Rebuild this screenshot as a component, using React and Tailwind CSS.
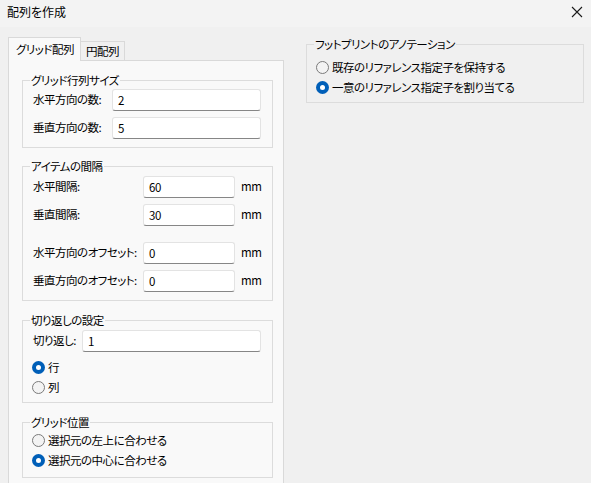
import React, { useState } from "react";

const Radio = ({ checked, label, onClick }) => (
  <div className="flex items-center h-[20px] leading-[20px] gap-[3px] cursor-default whitespace-nowrap" onClick={onClick}>
    {checked ? (
      <span className="w-[13px] h-[13px] rounded-full bg-[#005fb8] flex items-center justify-center shrink-0">
        <span className="w-[5px] h-[5px] rounded-full bg-white" />
      </span>
    ) : (
      <span className="w-[13px] h-[13px] rounded-full border border-[#7a7a7a] bg-[#f3f3f3] shrink-0" />
    )}
    <span>{label}</span>
  </div>
);

const TextBox = ({ value, className = "" }) => (
  <div
    className={`h-[22px] bg-white border border-[#e3e3e3] border-b-[#868686] rounded-[3px] pl-[5px] flex items-center leading-[14px] ${className}`}
  >
    {value}
  </div>
);

// Group box: legend sits on the top border like a Windows group box
const Group = ({ title, className = "", inner = "", children }) => (
  <fieldset className={`border border-[#dcdcdc] p-0 ${className}`}>
    <legend className="ml-[7px] px-[1px] leading-[14px] whitespace-nowrap">{title}</legend>
    <div className={inner}>{children}</div>
  </fieldset>
);

const Row = ({ label, value, labelWidth, inputWidth, unit, className = "" }) => (
  <div className={`flex items-center ${className}`}>
    <span className="shrink-0 whitespace-nowrap" style={{ width: labelWidth }}>
      {label}
    </span>
    <TextBox value={value} className={inputWidth} />
    {unit && <span className="ml-[6px]">mm</span>}
  </div>
);

export default function App() {
  const [wrap, setWrap] = useState("row");
  const [position, setPosition] = useState("center");
  const [annotation, setAnnotation] = useState("unique");
  const [tab, setTab] = useState("grid");

  return (
    <div className="w-[591px] h-[483px] overflow-hidden bg-[#f0f0f0] text-[11.5px] tracking-[-0.5px] text-black font-['Noto_Sans_CJK_JP',sans-serif] [font-feature-settings:'palt']">
      {/* Title bar */}
      <div className="h-[27px] bg-[#f3f3f3] flex items-start justify-between pl-[7px] pr-[7px] pt-[4px]">
        <span className="leading-[16px] text-[12px] tracking-normal">配列を作成</span>
        <svg width="12" height="12" viewBox="0 0 12 12" className="mt-[2px] mr-[1px]">
          <path d="M1 1 L11 11 M11 1 L1 11" stroke="#1a1a1a" strokeWidth="1.1" fill="none" />
        </svg>
      </div>

      <div className="flex items-start pt-[10px]">
        {/* Left: tabs */}
        <div className="ml-[8px] w-[276px]">
          <div className="flex items-end h-[23px]">
            <div
              onClick={() => setTab("grid")}
              className="relative z-10 h-[24px] -mb-px w-[73px] bg-[#f9f9f9] border border-b-0 border-[#d9d9d9] flex items-start pt-[3px] pl-[7px] leading-[16px] whitespace-nowrap"
            >
              グリッド配列
            </div>
            <div
              onClick={() => setTab("circle")}
              className="h-[19px] w-[45px] -ml-px border border-b-0 border-[#d9d9d9] bg-[#f0f0f0] flex items-start pt-[1px] pl-[5px] leading-[16px] whitespace-nowrap"
            >
              円配列
            </div>
          </div>
          <div className="border border-[#d9d9d9] bg-[#f9f9f9] pt-[12px] pb-[20px] h-[440px]">
            <Group title="グリッド行列サイズ" className="ml-[13px] w-[251px]" inner="px-[10px] pb-[8px]">
              <Row label="水平方向の数:" value="2" labelWidth={79} inputWidth="w-[149px]" className="mt-[2px]" />
              <Row label="垂直方向の数:" value="5" labelWidth={79} inputWidth="w-[149px]" className="mt-[6px]" />
            </Group>

            <Group title="アイテムの間隔" className="mt-[11px] ml-[13px] w-[251px]" inner="px-[10px] pb-[8px]">
              <Row label="水平間隔:" value="60" labelWidth={110} inputWidth="w-[92px]" unit className="mt-[3px]" />
              <Row label="垂直間隔:" value="30" labelWidth={110} inputWidth="w-[92px]" unit className="mt-[6px]" />
              <Row label="水平方向のオフセット:" value="0" labelWidth={110} inputWidth="w-[92px]" unit className="mt-[16px]" />
              <Row label="垂直方向のオフセット:" value="0" labelWidth={110} inputWidth="w-[92px]" unit className="mt-[6px]" />
            </Group>

            <Group title="切り返しの設定" className="mt-[12px] ml-[13px] w-[251px]" inner="px-[10px] pb-[5px]">
              <Row label="切り返し:" value="1" labelWidth={49} inputWidth="w-[179px]" className="mt-[3px]" />
              <div className="mt-[5px] -ml-px">
                <Radio label="行" checked={wrap === "row"} onClick={() => setWrap("row")} />
                <Radio label="列" checked={wrap === "col"} onClick={() => setWrap("col")} />
              </div>
            </Group>

            <Group title="グリッド位置" className="mt-[12px] ml-[13px] w-[251px]" inner="px-[9px] pb-[7px]">
              <div className="mt-[1px]">
                <Radio
                  label="選択元の左上に合わせる"
                  checked={position === "topleft"}
                  onClick={() => setPosition("topleft")}
                />
                <Radio
                  label="選択元の中心に合わせる"
                  checked={position === "center"}
                  onClick={() => setPosition("center")}
                />
              </div>
            </Group>
          </div>
        </div>

        {/* Right: annotation group */}
        <Group title="フットプリントのアノテーション" className="ml-[22px] w-[278px]" inner="px-[9px] pb-[5px]">
          <div className="mt-[6px]">
            <Radio
              label="既存のリファレンス指定子を保持する"
              checked={annotation === "keep"}
              onClick={() => setAnnotation("keep")}
            />
            <Radio
              label="一意のリファレンス指定子を割り当てる"
              checked={annotation === "unique"}
              onClick={() => setAnnotation("unique")}
            />
          </div>
        </Group>
      </div>
    </div>
  );
}
